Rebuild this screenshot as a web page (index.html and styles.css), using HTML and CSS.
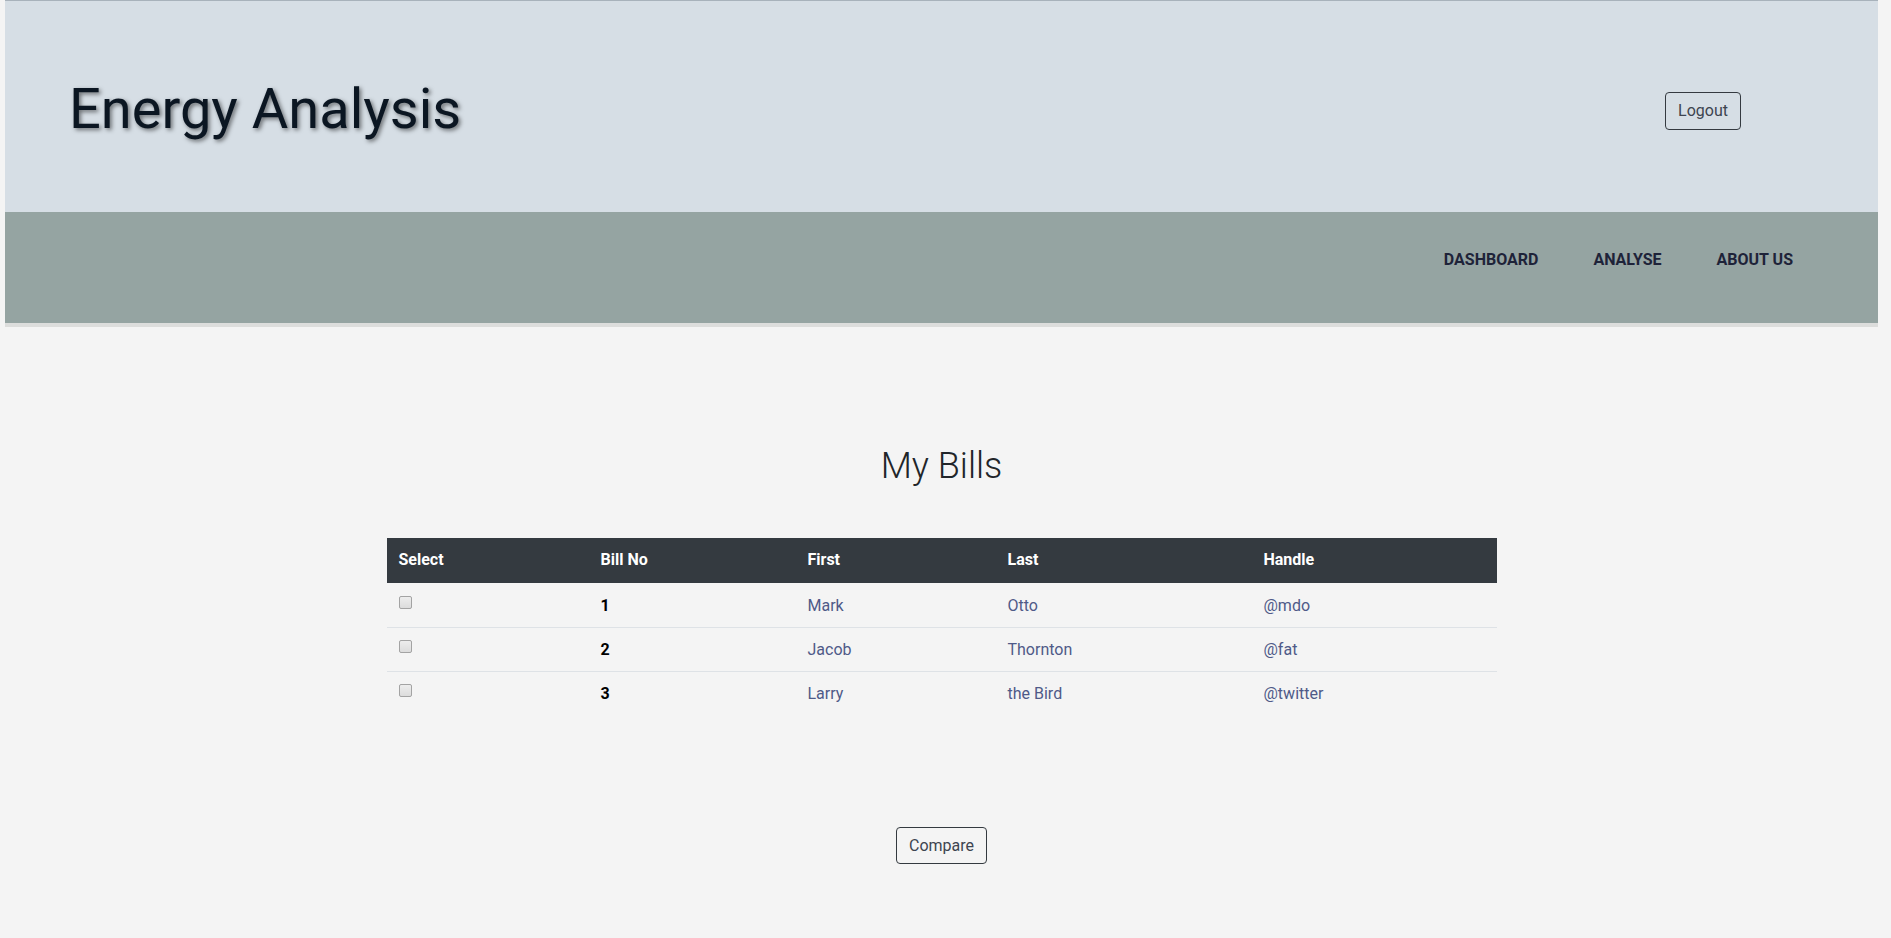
FILE: index.html
```html
<!DOCTYPE html>
<html lang="en">
<head>
<meta charset="utf-8">
<title>Energy Analysis</title>
<link rel="stylesheet" href="styles.css">
</head>
<body>
<div class="page">
  <header class="topbar">
    <h1 class="brand">Energy Analysis</h1>
    <button class="btn">Logout</button>
  </header>
  <nav class="navbar">
    <a class="nav-link" href="#">DASHBOARD</a>
    <a class="nav-link" href="#">ANALYSE</a>
    <a class="nav-link" href="#">ABOUT US</a>
  </nav>
  <div class="nav-shadow"></div>
  <main class="content">
    <h2 class="page-title">My Bills</h2>
    <div class="table-wrap">
      <table class="bills">
        <colgroup>
          <col class="c1"><col class="c2"><col class="c3"><col class="c4"><col class="c5">
        </colgroup>
        <thead>
          <tr><th>Select</th><th>Bill No</th><th>First</th><th>Last</th><th>Handle</th></tr>
        </thead>
        <tbody>
          <tr><td><input type="checkbox" class="chk"></td><td class="num">1</td><td>Mark</td><td>Otto</td><td>@mdo</td></tr>
          <tr><td><input type="checkbox" class="chk"></td><td class="num">2</td><td>Jacob</td><td>Thornton</td><td>@fat</td></tr>
          <tr><td><input type="checkbox" class="chk"></td><td class="num">3</td><td>Larry</td><td>the Bird</td><td>@twitter</td></tr>
        </tbody>
      </table>
    </div>
    <div class="actions">
      <button class="btn btn-compare">Compare</button>
    </div>
  </main>
</div>
</body>
</html>
```

FILE: styles.css
```css
html, body {
  margin: 0;
  padding: 0;
  background: #f4f4f4;
  font-family: Roboto, "Liberation Sans", sans-serif;
}
.page {
  margin-left: 5px;
  width: 1873px;
}
.topbar {
  box-sizing: border-box;
  height: 212px;
  border-top: 1px solid #a8b2bb;
  background: #d6dee5;
  display: flex;
  align-items: center;
  justify-content: space-between;
  padding: 9px 137px 0 64px;
}
.brand {
  margin: 0 0 4px 0;
  font-size: 56px;
  font-weight: 400;
  line-height: 72px;
  color: #0b1622;
  text-shadow: 2px 2px 4px rgba(0, 0, 0, 0.5);
}
.btn {
  font-family: Roboto, "Liberation Sans", sans-serif;
  font-size: 16px;
  line-height: 24px;
  color: #3d4450;
  background: transparent;
  border: 1px solid #343a40;
  border-radius: 4px;
  padding: 6px 12px;
  cursor: pointer;
}
.navbar {
  height: 111px;
  background: #95a4a2;
  display: flex;
  justify-content: flex-end;
  align-items: center;
  gap: 55px;
  padding-right: 85px;
  box-sizing: border-box;
  padding-bottom: 16px;
}
.nav-link {
  font-size: 16px;
  font-weight: 700;
  color: #1e2339;
  text-decoration: none;
  line-height: 24px;
}
.nav-shadow {
  height: 4px;
  background: #dcdddc;
}
.content {
  padding-top: 118px;
  padding-bottom: 60px;
}
.page-title {
  margin: 0;
  text-align: center;
  font-size: 36px;
  font-weight: 300;
  line-height: 43px;
  color: #212529;
}
.table-wrap {
  margin-top: 50px;
  display: flex;
  justify-content: center;
}
.bills {
  width: 1110px;
  table-layout: fixed;
  border-collapse: collapse;
  font-size: 16px;
  line-height: 24px;
}
.c1 { width: 202px; }
.c2 { width: 207px; }
.c3 { width: 200px; }
.c4 { width: 256px; }
.c5 { width: 245px; }
.bills th {
  background: #343a40;
  color: #fff;
  font-weight: 700;
  text-align: left;
  padding: 10px 12px 11px;
}
.bills td {
  padding: 10px 12px 9px;
  color: #4f5a88;
  vertical-align: top;
  border-top: 1px solid #dee2e6;
}
.bills tbody tr:first-child td {
  border-top: none;
  padding-top: 11px;
}
.bills td.num {
  color: #000;
  font-weight: 700;
}
.chk {
  -webkit-appearance: none;
  appearance: none;
  box-sizing: border-box;
  width: 13px;
  height: 13px;
  margin: 2px 0 0 0;
  vertical-align: top;
  background: linear-gradient(#ededed, #dcdcdc);
  border: 1px solid #a3a3a3;
  border-radius: 2px;
}
.actions {
  margin-top: 112px;
  display: flex;
  justify-content: center;
}
.btn-compare {
  padding: 6px 12px 5px;
}
```
